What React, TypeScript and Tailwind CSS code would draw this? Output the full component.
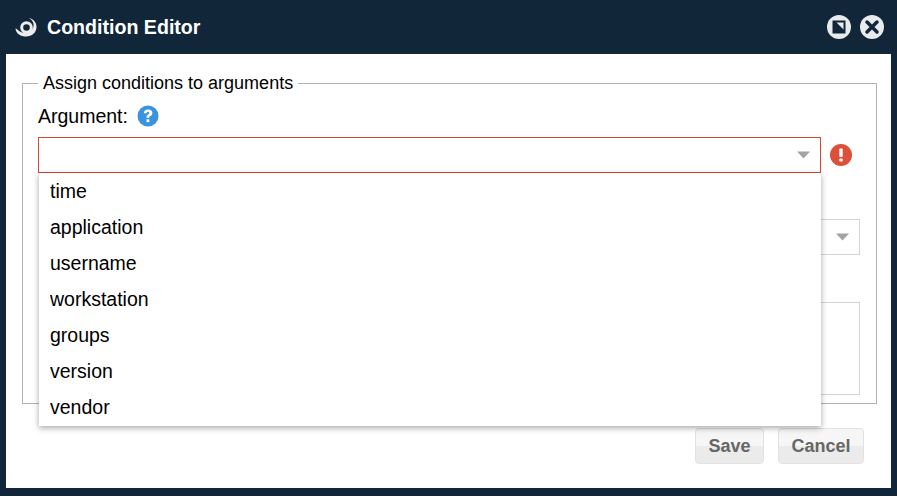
import React from "react";

const Caret = () => (
  <svg width="13" height="8" viewBox="0 0 13 8" className="block">
    <path d="M0 0.500H13L6.500 7.500Z" fill="#a3a3a3" />
  </svg>
);

const options = ["time", "application", "username", "workstation", "groups", "version", "vendor"];

export default function App() {
  return (
    <div className="w-[897px] h-[496px] bg-[#12263a] overflow-hidden flex flex-col font-['Liberation_Sans',Arial,sans-serif] text-black">
      <div className="h-[54px] shrink-0 flex items-center pl-[14px] pr-[13px] text-white">
        <svg width="24" height="22" viewBox="0 0 24 22" className="block">
          <circle cx="12.500" cy="11.500" r="4.800" fill="none" stroke="#ececec" strokeWidth="3" />
          <path d="M1.500 12.500C2 18 7 20.500 12 20.500c6 0 10.500-4 10.500-9.500 0-4.500-3-8-7.500-9 3.500 2 5 5 4.500 8-.6 4.500-4.500 7.500-9 7-3.500-.4-6-2.200-8.500-4.500Z" fill="#ececec" />
        </svg>
        <div className="ml-[9px] text-[19.600px] leading-6 font-bold">Condition Editor</div>
        <div className="ml-auto flex gap-[9px]">
          <svg width="24" height="24" viewBox="0 0 24 24" className="block">
            <circle cx="12" cy="12" r="12" fill="#e8eaeb" />
            <path d="M5.500 5.500H18.500V18.500H5.500Z" fill="#12263a" />
            <path d="M9.500 7.500H16.500V14.500Z" fill="#e8eaeb" />
          </svg>
          <svg width="24" height="24" viewBox="0 0 24 24" className="block">
            <circle cx="12" cy="12" r="12" fill="#e8eaeb" />
            <path d="M7 7l10 10M17 7L7 17" stroke="#12263a" strokeWidth="3.500" strokeLinecap="round" />
          </svg>
        </div>
      </div>

      <div className="relative mx-[6px] h-[434px] shrink-0 bg-white pl-4 pr-[14px] pt-5">
        <fieldset className="h-[330px] border border-[#b3b3b3] pl-[15px] pr-4">
          <legend className="px-[5px] text-[18px] leading-[18px]">Assign conditions to arguments</legend>
          <div className="flex items-center h-[22px] mt-[13px] text-[19.500px] leading-[22px]">
            Argument:
            <svg width="22" height="22" viewBox="0 0 22 22" className="block ml-[9px]">
              <circle cx="11" cy="11" r="10.500" fill="#3a93dc" />
              <path d="M6.800 8.300c0-2.400 1.800-3.900 4.300-3.900 2.600 0 4.300 1.400 4.300 3.500 0 1.700-1 2.500-2.100 3.200-.8.500-1.100.9-1.100 1.700H9.500c0-1.600.5-2.500 1.600-3.200.8-.5 1.200-.9 1.200-1.600 0-.8-.5-1.300-1.300-1.300-.9 0-1.400.6-1.400 1.600Z" fill="#fff" />
              <rect x="9.500" y="14.300" width="2.800" height="2.800" fill="#fff" />
            </svg>
          </div>
          <div className="flex items-center mt-[10px]">
            <div className="w-[783px] h-9 border border-[#d5492f] bg-white flex items-center justify-end pr-[10px] shrink-0">
              <Caret />
            </div>
            <svg width="22" height="22" viewBox="0 0 22 22" className="block ml-[9px]">
              <circle cx="11" cy="11" r="11" fill="#dd4f38" />
              <rect x="9.300" y="4.500" width="3.400" height="8.500" rx="0.800" fill="#fff" />
              <rect x="9.300" y="14.500" width="3.400" height="3" rx="0.800" fill="#fff" />
            </svg>
          </div>
          <div className="mt-[46px] ml-px w-[821px] h-9 border border-[#d4d4d4] flex items-center justify-end pr-[10px]">
            <Caret />
          </div>
          <div className="mt-[47px] ml-px w-[821px] h-[93px] border border-[#d4d4d4]" />
        </fieldset>

        <div className="flex justify-end gap-[14px] mt-6 pr-[13px]">
          <button className="w-[69px] h-9 rounded-[4px] border border-[#e2e2e2] bg-[linear-gradient(#f6f6f6_50%,#ebebeb_50%)] text-[#666] text-lg font-bold">Save</button>
          <button className="w-[86px] h-9 rounded-[4px] border border-[#e2e2e2] bg-[linear-gradient(#f6f6f6_50%,#ebebeb_50%)] text-[#666] text-lg font-bold">Cancel</button>
        </div>

        <ul className="absolute left-[33px] top-[119px] w-[782px] bg-white pb-px shadow-[0_2px_6px_rgba(0,0,0,0.35)]">
          {options.map((o) => (
            <li key={o} className="h-9 pl-[11px] text-[19.500px] leading-9">{o}</li>
          ))}
        </ul>
      </div>
    </div>
  );
}
